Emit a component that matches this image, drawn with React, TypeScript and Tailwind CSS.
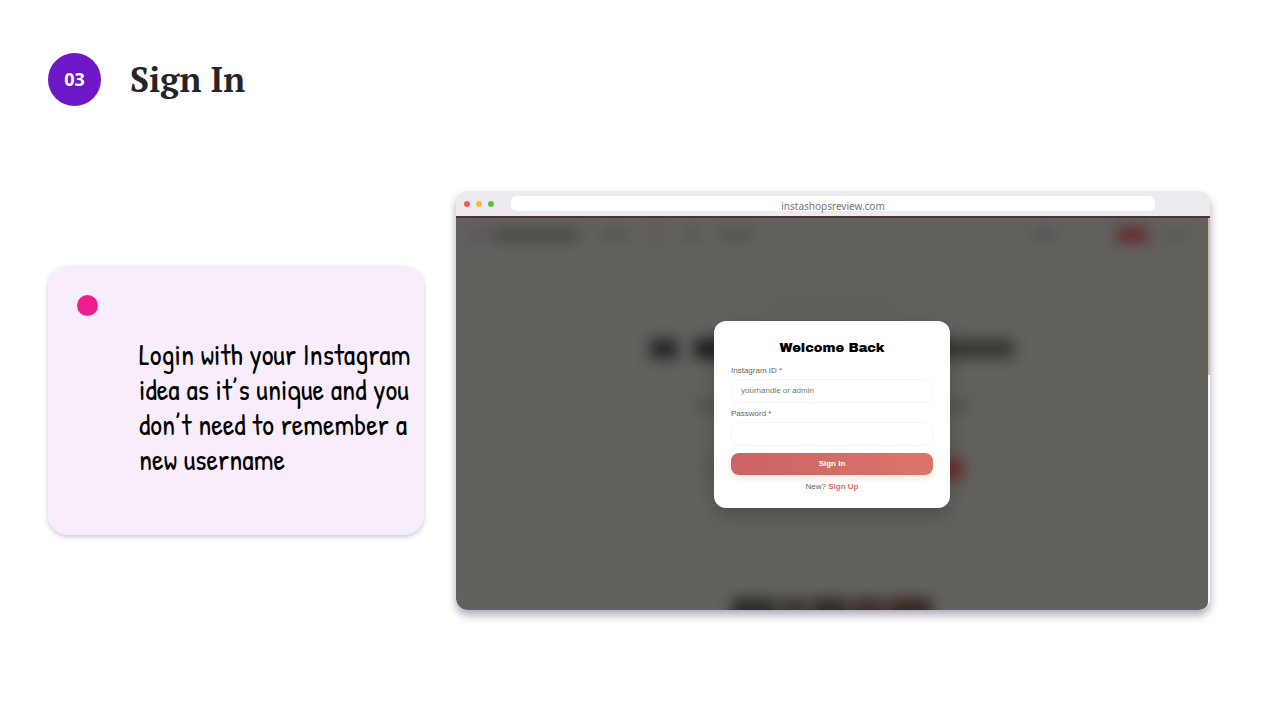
import type React from "react"

import { useState } from "react"

function BlurredPage() {
  return (
    <div aria-hidden="true" className="absolute inset-0 overflow-hidden">
      <div className="flex h-full flex-col items-center blur-[7px]">
        <div className="flex w-full items-center gap-5 pt-[9px] pr-5 pl-4">
          <div className="flex items-center gap-2">
            <div className="size-3 rounded bg-[#5c4860]" />
            <div className="h-3 w-22 bg-[#484845]" />
          </div>
          <div className="h-2 w-7 bg-[#4f4f4d]" />
          <div className="h-2 w-4 bg-[#66504f]" />
          <div className="h-2 w-4 bg-[#4f4f4d]" />
          <div className="h-2 w-8 bg-[#504d4b]" />
          <div className="ml-auto h-2 w-6 bg-[#4f4f4d]" />
          <div className="ml-10 h-4 w-8 bg-[#642c2b]" />
          <div className="-ml-1 h-2 w-6 bg-[#555552]" />
        </div>
        <div className="mt-15 h-2 w-32 bg-[#566053]" />
        <div className="mt-7 flex gap-4">
          <div className="h-5 w-7 bg-[#262625]" />
          <div className="h-5 w-40 bg-[#20201f]" />
          <div className="-ml-4 h-5 w-40 bg-[#383835]" />
        </div>
        <div className="mt-11 h-2 w-70 bg-[#4f4f4c]" />
        <div className="mt-12 flex h-5 w-66 justify-end bg-[#5d5c59]">
          <div className="w-30 bg-[#6a2c2b]" />
        </div>
        <div className="mt-auto -mb-4 flex gap-1">
          <div className="h-7 w-11 bg-[#2c2a27]" />
          <div className="h-7 w-7 bg-[#39352e]" />
          <div className="h-7 w-9 bg-[#302a24]" />
          <div className="h-7 w-8 bg-[#3a2f27]" />
          <div className="h-7 w-11 bg-[#36281f]" />
        </div>
      </div>
    </div>
  )
}

function SignInForm() {
  const [handle, setHandle] = useState("")
  const [password, setPassword] = useState("")

  const handleSubmit = (e: React.FormEvent) => {
    e.preventDefault()
  }

  const inputClass =
    "block h-6 w-full rounded-lg border border-[#f5f3f3] bg-white px-[9px] text-[8px] text-gray-700 outline-none placeholder:text-[#777777]"

  return (
    <form
      onSubmit={handleSubmit}
      className="relative w-[236px] rounded-xl bg-white px-[17px] pt-[17px] pb-[15px] font-['Liberation_Sans',sans-serif] text-[8px] leading-3 text-[#666461] shadow-[0_8px_20px_rgba(0,0,0,0.2)]"
    >
      <h2 className="text-center font-['Archivo_Black','Archivo',sans-serif] text-[13px] leading-5 font-normal text-black">
        Welcome Back
      </h2>
      <label htmlFor="handle" className="mt-[7px] mb-[2px] block">
        Instagram ID *
      </label>
      <input
        id="handle"
        type="text"
        value={handle}
        placeholder="yourhandle or admin"
        onChange={(e) => setHandle(e.target.value)}
        className={inputClass}
      />
      <label htmlFor="password" className="mt-[5px] mb-[2px] block">
        Password *
      </label>
      <input
        id="password"
        type="password"
        value={password}
        onChange={(e) => setPassword(e.target.value)}
        className={inputClass}
      />
      <button
        type="submit"
        className="mt-[7px] block h-[22px] w-full rounded-lg bg-linear-to-r from-[#cb6365] to-[#dc7569] font-bold text-white shadow-[0_3px_6px_rgba(220,100,100,0.2)]"
      >
        Sign In
      </button>
      <p className="mt-[6px] text-center">
        New?{" "}
        <a href="#signup" className="font-bold text-[#d96d6c]">
          Sign Up
        </a>
      </p>
    </form>
  )
}

export default function App() {
  return (
    <main className="min-h-screen bg-white pt-[53px] pr-[70px] pl-12">
      <header className="flex items-center gap-[29px]">
        <div className="flex size-[53px] items-center justify-center rounded-full bg-[#6d17c9] font-['Open_Sans',sans-serif] text-[18px] font-bold text-white">
          03
        </div>
        <h1 className="font-['PT_Serif','Liberation_Serif',serif] text-[34px] leading-[53px] font-bold text-[#26242b]">
          Sign In
        </h1>
      </header>

      <div className="mt-[85px] flex items-center gap-8">
        <section className="h-[269px] w-94 shrink-0 rounded-[20px] bg-[#f8eefb] pt-[29px] pl-[29px] shadow-[0_2px_5px_rgba(60,40,90,0.25)]">
          <div className="size-[21px] rounded-full bg-[#ed1e8f]" />
          <p className="mt-[21px] pl-[62px] font-['Patrick_Hand','Liberation_Sans_Narrow',sans-serif] text-[29px] leading-[35px] text-black">
            Login with your Instagram idea as it’s unique and you don’t need to remember a new username
          </p>
        </section>

        <section className="min-w-0 flex-1 overflow-hidden rounded-xl bg-[#eeebf0] shadow-[0_5px_9px_rgba(50,35,80,0.4)]">
          <div className="flex h-[25px] items-center pr-[55px] pl-2">
            <div className="flex gap-[6px]">
              <span className="size-[6px] rounded-full bg-[#f35c57]" />
              <span className="size-[6px] rounded-full bg-[#f6b93b]" />
              <span className="size-[6px] rounded-full bg-[#57c24a]" />
            </div>
            <div className="ml-[17px] h-[15px] flex-1 rounded-md bg-white pt-1 text-center font-['Noto_Sans',sans-serif] text-[10px] leading-3 text-[#77757a]">
              instashopsreview.com
            </div>
          </div>
          <div className="flex aspect-[754/394] border-t-2 border-[#4b3339] bg-white">
            <div className="relative flex flex-1 items-center justify-center overflow-hidden rounded-br-lg bg-[#62615e]">
              <BlurredPage />
              <SignInForm />
            </div>
            <div className="w-[2px] bg-[#fbf7f5]">
              <div className="h-2/5 bg-[#cfb9a9]" />
            </div>
          </div>
        </section>
      </div>
    </main>
  )
}
